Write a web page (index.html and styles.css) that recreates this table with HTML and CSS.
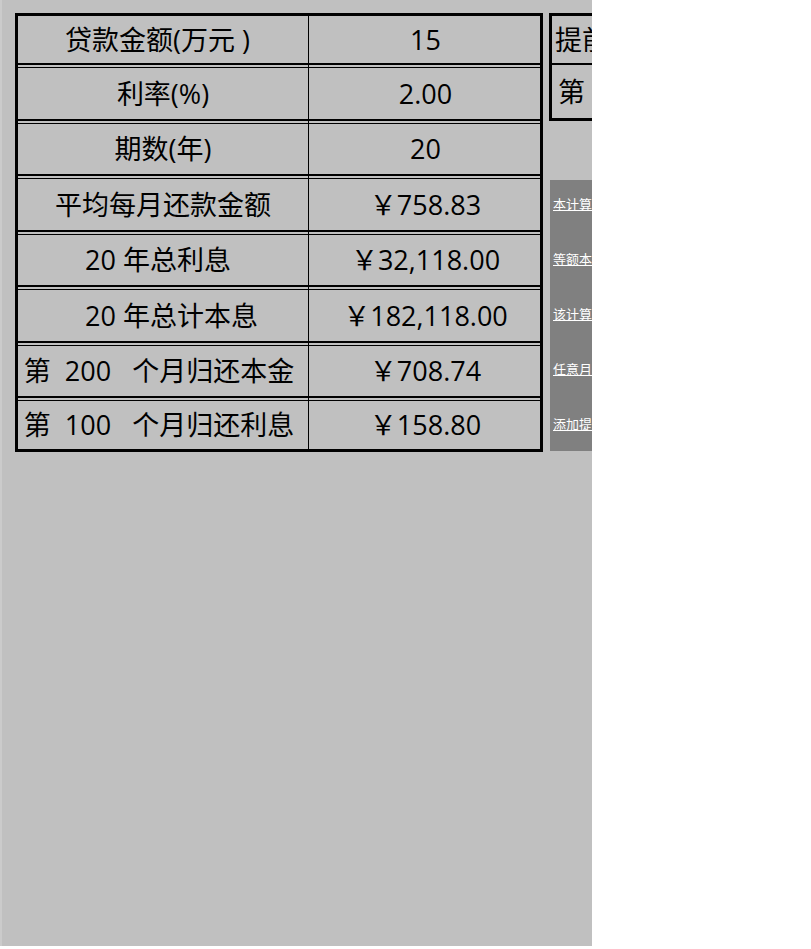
FILE: index.html
```html
<!DOCTYPE html>
<html lang="zh-CN">
<head>
<meta charset="utf-8">
<title>贷款计算器</title>
<link rel="stylesheet" href="styles.css">
</head>
<body>
<div class="sheet">
  <div class="loan-table">
    <div class="row r1"><div class="label shift">贷款金额(万元 )</div><div class="value">15</div></div>
    <div class="row r2"><div class="label">利率(%)</div><div class="value">2.00</div></div>
    <div class="row r3"><div class="label">期数(年)</div><div class="value">20</div></div>
    <div class="row r4"><div class="label">平均每月还款金额</div><div class="value">￥758.83</div></div>
    <div class="row r5"><div class="label indent">20 年总利息</div><div class="value">￥32,118.00</div></div>
    <div class="row r6"><div class="label indent">20 年总计本息</div><div class="value">￥182,118.00</div></div>
    <div class="row r7"><div class="label pre">第  200   个月归还本金</div><div class="value">￥708.74</div></div>
    <div class="row r8"><div class="label pre">第  100   个月归还利息</div><div class="value">￥158.80</div></div>
  </div>
  <div class="side">
    <div class="prepay-table">
      <div class="prow p1">提前还款计算</div>
      <div class="prow p2">第  12  个月提前还款</div>
    </div>
    <div class="notes">
      <a class="note" href="#">本计算器为等额本息还款计算</a>
      <a class="note" href="#">等额本息：每月还款金额相同</a>
      <a class="note" href="#">该计算器可计算任意月份的本金</a>
      <a class="note" href="#">任意月份归还本金与利息查询</a>
      <a class="note" href="#">添加提前还款功能</a>
    </div>
  </div>
</div>
</body>
</html>
```

FILE: styles.css
```css
html, body {
  margin: 0;
  padding: 0;
  background: #ffffff;
}

.sheet {
  box-sizing: border-box;
  width: 592px;
  height: 946px;
  background: #c0c0c0;
  border-left: 2px solid #cbcbcb;
  padding: 13px 0 0 13px;
  overflow: hidden;
  display: flex;
  align-items: flex-start;
  gap: 6px;
  font-family: "Open Sans", "Noto Sans CJK SC", sans-serif;
  font-size: 27px;
  color: #000;
}

.loan-table {
  flex: none;
  width: 522px;
  border: 3px solid #000;
  background:
    linear-gradient(to right, transparent 290px, #000 290px, #000 291px, transparent 291px),
    #c0c0c0;
}

.row {
  display: grid;
  grid-template-columns: 290px 231px;
  border-top: 1px solid #000;
  border-bottom: 2px solid #000;
  margin-bottom: 2px;
  height: 50px;
  line-height: 32px;
}

.row.r1 { border-top: none; height: 47px; }
.row.r2, .row.r4, .row.r6 { height: 51px; }
.row.r8 { border-bottom: none; margin-bottom: 0; height: 48px; }

.label, .value {
  display: flex;
  align-items: center;
  justify-content: center;
  white-space: pre;
  background: #c0c0c0;
}

.value { margin-left: 1px; padding-left: 3px; }

.label.shift { padding-right: 11px; }
.label.indent { justify-content: flex-start; padding-left: 67px; }
.label.pre { padding-right: 8px; }

.side {
  flex: none;
  width: 240px;
  display: flex;
  flex-direction: column;
}

.prepay-table {
  border: 3px solid #000;
  background: #c0c0c0;
}

.prow {
  display: flex;
  align-items: center;
  white-space: pre;
  line-height: 32px;
}

.prow.p1 { height: 47px; padding-left: 3px; border-bottom: 2px solid #000; }
.prow.p2 { height: 53px; padding-left: 6px; }

.notes {
  margin-top: 59px;
  margin-left: 1px;
  height: 271px;
  background: #808080;
  padding: 14px 0 0 3px;
  box-sizing: border-box;
  display: flex;
  flex-direction: column;
  gap: 35px;
}

.note {
  display: block;
  height: 20px;
  line-height: 20px;
  font-family: "Noto Sans CJK SC", sans-serif;
  font-size: 13px;
  color: #ffffff;
  text-decoration: underline;
  white-space: nowrap;
}
```
